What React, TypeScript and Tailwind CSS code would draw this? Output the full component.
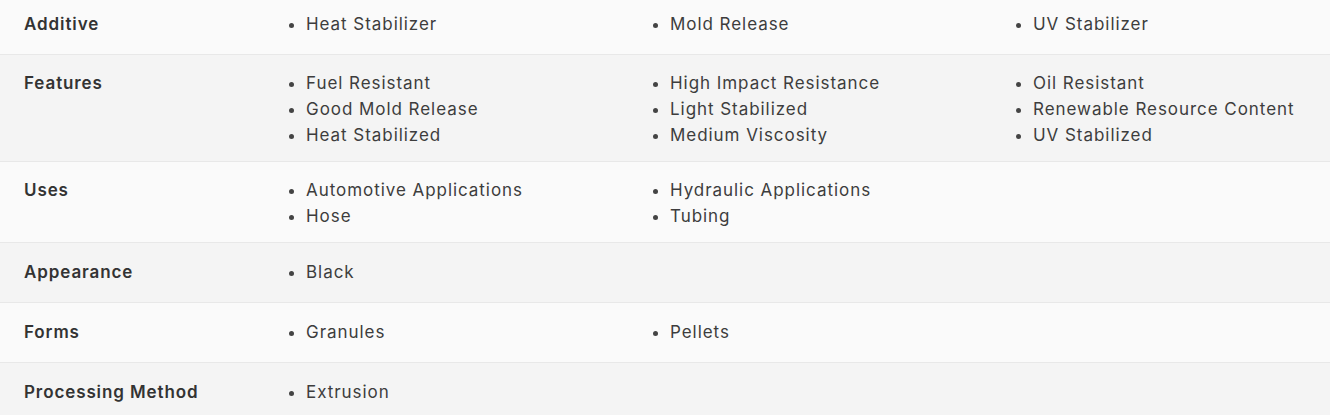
const rows: { label: string; cols: string[][] }[] = [
  { label: "Additive", cols: [["Heat Stabilizer"], ["Mold Release"], ["UV Stabilizer"]] },
  {
    label: "Features",
    cols: [
      ["Fuel Resistant", "Good Mold Release", "Heat Stabilized"],
      ["High Impact Resistance", "Light Stabilized", "Medium Viscosity"],
      ["Oil Resistant", "Renewable Resource Content", "UV Stabilized"],
    ],
  },
  { label: "Uses", cols: [["Automotive Applications", "Hose"], ["Hydraulic Applications", "Tubing"], []] },
  { label: "Appearance", cols: [["Black"], [], []] },
  { label: "Forms", cols: [["Granules"], ["Pellets"], []] },
  { label: "Processing Method", cols: [["Extrusion"], [], []] },
];

export default function App() {
  return (
    <div className="w-[1330px] h-[415px] overflow-hidden bg-white font-['Inter',sans-serif] text-[#3d3d3d]">
      {/* top of the table is scrolled a few px out of view */}
      <div className="-mt-[5px]">
        {rows.map((row, i) => {
          const multi = row.cols.some((c) => c.length > 1);
          return (
            <div
              key={row.label}
              className={`flex min-h-[60px] items-center border-b border-[#e8e8e8] ${
                multi ? "pt-[15px] pb-[13px]" : "pt-[13px] pb-[15px]"
              } ${i % 2 === 0 ? "bg-[#fafafa]" : "bg-[#f4f4f4]"}`}
            >
              <div className="flex w-full items-start">
                <div className="w-[263px] shrink-0 pl-6 text-[17px] font-semibold leading-[26px] tracking-[0.9px] text-[#333]">
                  {row.label}
                </div>
                <div className="grid flex-1 grid-cols-[364px_363px_1fr] pl-[24px]">
                  {row.cols.map((items, j) => (
                    <ul key={j} className="list-disc pl-[19px] marker:text-[#444]">
                      {items.map((it) => (
                        <li key={it} className="text-[17px] leading-[26px] tracking-[0.95px]">
                          {it}
                        </li>
                      ))}
                    </ul>
                  ))}
                </div>
              </div>
            </div>
          );
        })}
      </div>
    </div>
  );
}
